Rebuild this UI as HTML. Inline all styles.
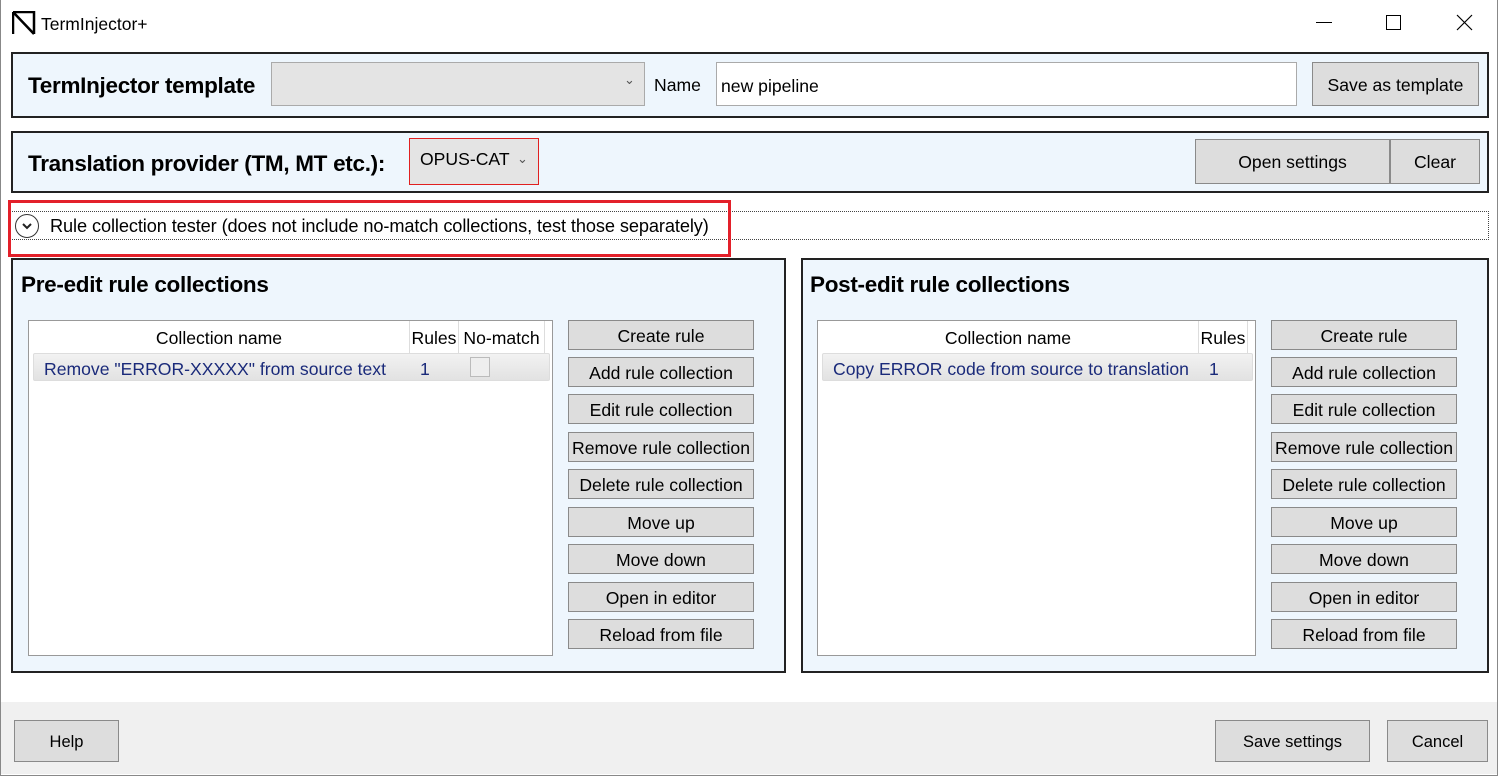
<!DOCTYPE html>
<html><head><meta charset="utf-8"><style>
*{box-sizing:border-box;margin:0;padding:0}
body{width:1500px;height:776px;background:#fff;font-family:"Liberation Sans",sans-serif;color:#000;position:relative;overflow:hidden;font-size:17px}
.a{position:absolute}
.win{left:0;top:0;width:1498px;height:776px;border:1px solid #888;border-top:none}
.panel{position:absolute;background:#eef6fd;border:2px solid #222}
.btn{position:absolute;background:#dddddd;border:1px solid #8a8a8a;text-align:center;font-size:17.6px;color:#000;display:flex;align-items:center;justify-content:center;white-space:nowrap;padding-top:2px}
.h{font-weight:bold;font-size:22.5px;position:absolute;letter-spacing:-0.3px}
.list{position:absolute;background:#fff;border:1px solid #999}
.col{position:absolute;top:0;height:32px;border-right:1px solid #ddd;display:flex;align-items:center;justify-content:center;font-size:17.6px;padding-top:2px}
.row{position:absolute;left:4px;top:32px;height:28px;background:linear-gradient(#f2f2f2,#e2e2e2);border:1px solid #ddd;border-radius:2px;color:#1a2a7a;font-size:17.6px}
</style></head><body>
<div class="a win"></div>
<svg class="a" style="left:12px;top:11px" width="24" height="24" viewBox="0 0 24 24"><path d="M1 1H22V23M1 1V23M2 2L22 23" stroke="#000" stroke-width="2.5" fill="none"/></svg>
<div class="a" style="left:41px;top:14px;font-size:17.5px">TermInjector+</div>
<div class="a" style="left:1316px;top:22px;width:16px;border-top:1px solid #000"></div>
<div class="a" style="left:1386px;top:15px;width:15px;height:15px;border:1px solid #000"></div>
<svg class="a" style="left:1456px;top:14px" width="17" height="17"><path d="M1 1L16 16M16 1L1 16" stroke="#000" stroke-width="1.2"/></svg>

<div class="panel" style="left:11px;top:52px;width:1478px;height:66px"></div>
<div class="h" style="left:28px;top:73px">TermInjector template</div>
<div class="a" style="left:271px;top:62px;width:374px;height:44px;background:#e4e4e4;border:1px solid #aaa"></div>
<div class="a" style="left:624px;top:72px;font-size:13px;color:#555">⌄</div>
<div class="a" style="left:654px;top:75px;font-size:17.6px">Name</div>
<div class="a" style="left:716px;top:62px;width:581px;height:44px;background:#fff;border:1px solid #aaa;padding:13px 0 0 4px;font-size:17.6px">new pipeline</div>
<div class="btn" style="left:1312px;top:62px;width:167px;height:44px">Save as template</div>

<div class="panel" style="left:11px;top:131px;width:1478px;height:62px"></div>
<div class="h" style="left:28px;top:151px">Translation provider (TM, MT etc.):</div>
<div class="a" style="left:409px;top:138px;width:130px;height:47px;background:#e4e4e4;border:1px solid #e02020;padding:10px 0 0 10px;font-size:17.6px">OPUS-CAT</div>
<div class="a" style="left:517px;top:151px;font-size:13px;color:#555">⌄</div>
<div class="btn" style="left:1195px;top:139px;width:195px;height:45px">Open settings</div>
<div class="btn" style="left:1390px;top:139px;width:90px;height:45px">Clear</div>

<div class="a" style="left:10px;top:211px;width:1479px;height:29px;border:1px dotted #444"></div>
<div class="a" style="left:8px;top:200px;width:723px;height:57px;border:3px solid #e3202a"></div>
<div class="a" style="left:15px;top:214px;width:24px;height:24px;border:1px solid #333;border-radius:50%;background:#fff"></div>
<svg class="a" style="left:21px;top:220px" width="12" height="12"><path d="M2 4L6 8L10 4" stroke="#222" stroke-width="2" fill="none"/></svg>
<div class="a" style="left:50px;top:216px;font-size:18.2px;letter-spacing:-0.1px">Rule collection tester (does not include no-match collections, test those separately)</div>

<div class="panel" style="left:11px;top:258px;width:775px;height:415px"></div>
<div class="h" style="left:21px;top:272px">Pre-edit rule collections</div>
<div class="list" style="left:28px;top:320px;width:525px;height:336px">
 <div class="col" style="left:0;width:381px">Collection name</div>
 <div class="col" style="left:381px;width:49px">Rules</div>
 <div class="col" style="left:430px;width:86px">No-match</div>
 <div class="row" style="width:517px"><span class="a" style="left:10px;top:5px">Remove "ERROR-XXXXX" from source text</span><span class="a" style="left:386px;top:5px">1</span><span class="a" style="left:436px;top:3px;width:20px;height:20px;border:1px solid #bbb;background:#eee"></span></div>
</div>
<div class="panel" style="left:801px;top:258px;width:688px;height:415px"></div>
<div class="h" style="left:810px;top:272px">Post-edit rule collections</div>
<div class="list" style="left:817px;top:320px;width:439px;height:336px">
 <div class="col" style="left:0;width:381px">Collection name</div>
 <div class="col" style="left:381px;width:49px">Rules</div>
 <div class="row" style="width:431px"><span class="a" style="left:10px;top:5px">Copy ERROR code from source to translation</span><span class="a" style="left:386px;top:5px">1</span></div>
</div>
<div id="btns"></div>
<script>
var l=["Create rule","Add rule collection","Edit rule collection","Remove rule collection","Delete rule collection","Move up","Move down","Open in editor","Reload from file"];
var t=[320,357,394,432,469,507,544,582,619],h='';
[568,1271].forEach(function(x){l.forEach(function(s,i){h+='<div class="btn" style="left:'+x+'px;top:'+t[i]+'px;width:186px;height:30px">'+s+'</div>';});});
document.getElementById('btns').innerHTML=h;
</script>

<div class="a" style="left:1px;top:702px;width:1496px;height:72px;background:#f0f0f0"></div>
<div class="btn" style="left:14px;top:720px;width:105px;height:42px;font-size:16.5px">Help</div>
<div class="btn" style="left:1215px;top:720px;width:155px;height:42px;font-size:16.5px">Save settings</div>
<div class="btn" style="left:1387px;top:720px;width:101px;height:42px;font-size:16.5px">Cancel</div>
</body></html>
